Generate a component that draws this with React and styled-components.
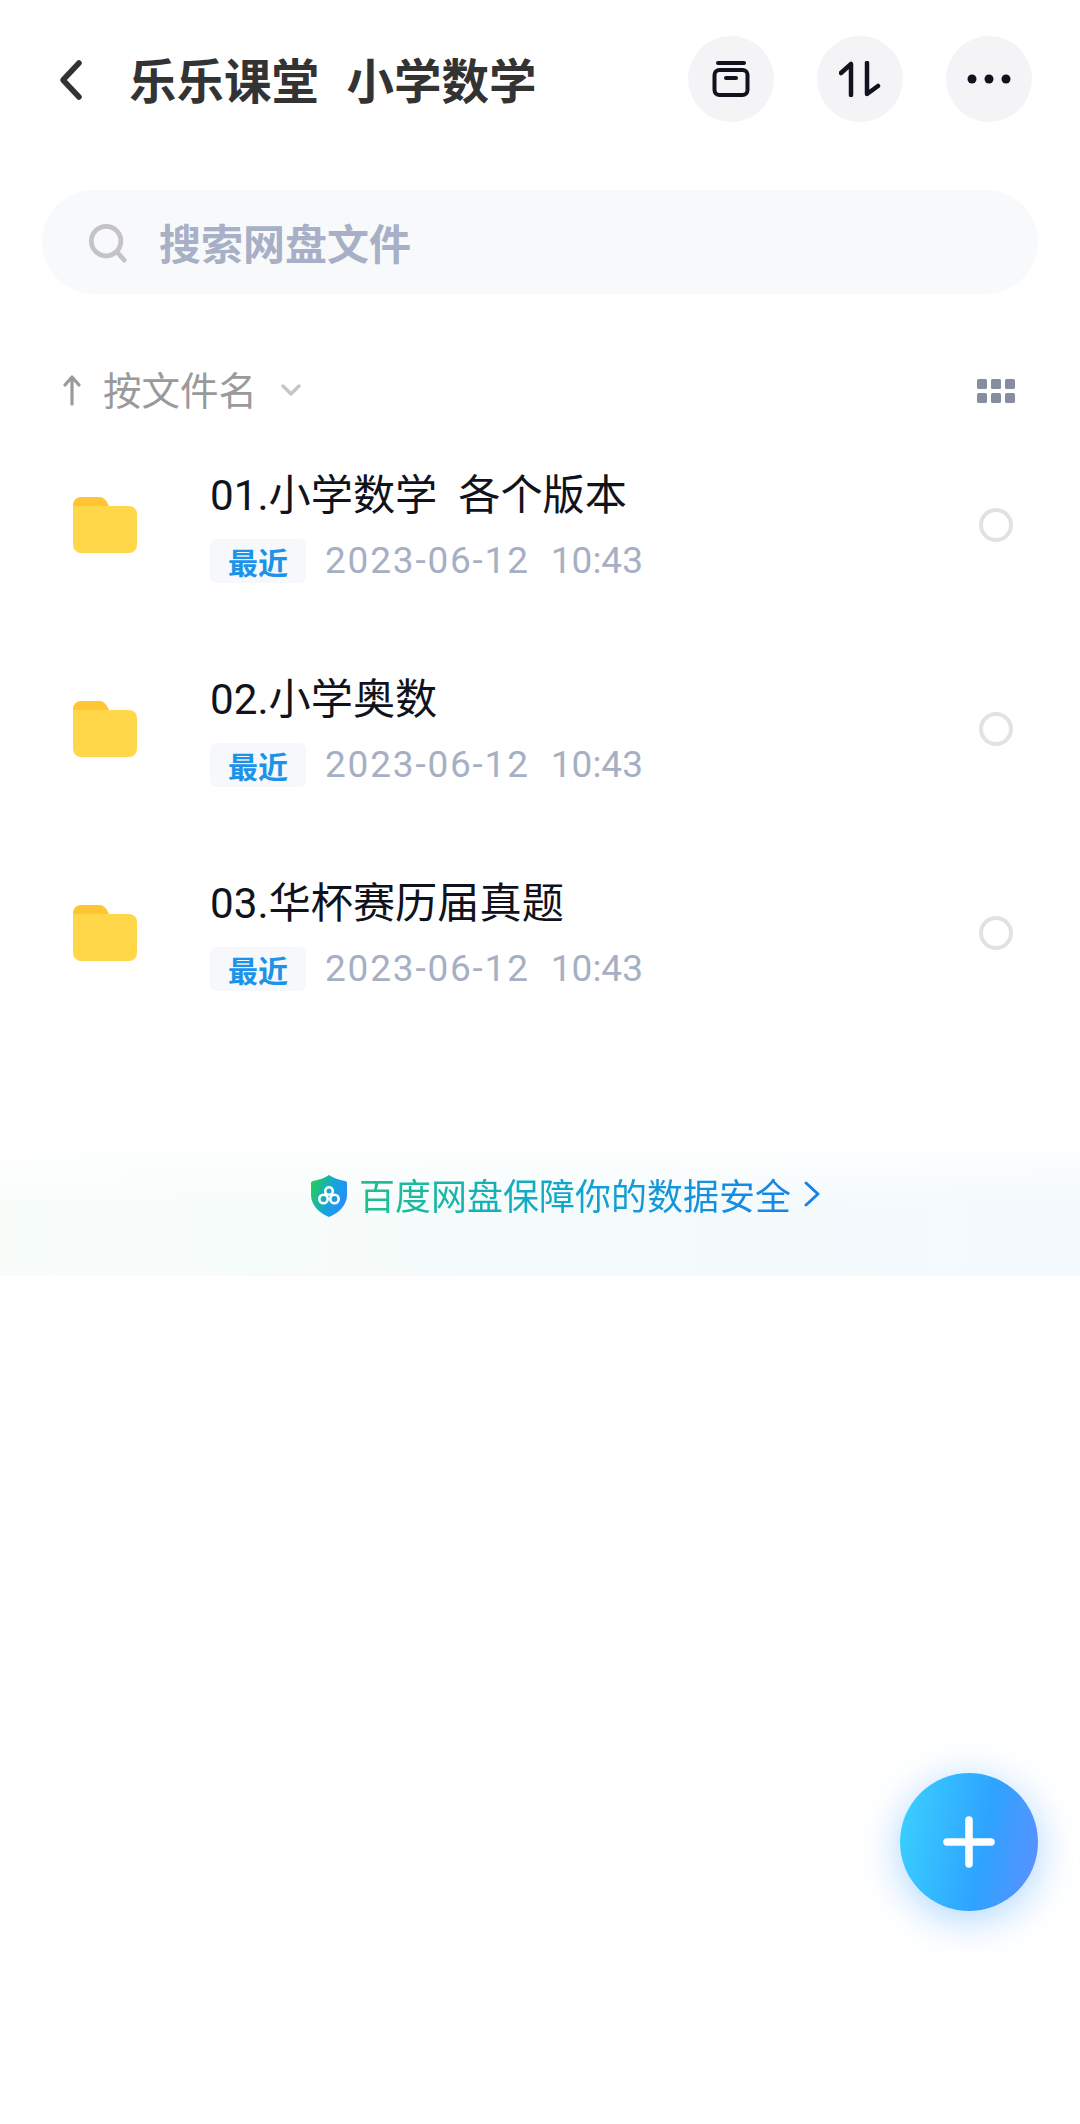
import React from "react";
import styled, { createGlobalStyle } from "styled-components";

const Global = createGlobalStyle`
  html, body { margin: 0; padding: 0; background: #fff; }
  * { box-sizing: border-box; }
  body { font-family: "Noto Sans CJK SC", "Noto Sans", sans-serif; }
`;

const Page = styled.div`
  position: relative;
  width: 1080px;
  height: 2124px;
  overflow: hidden;
  background: #fff;
  display: flex;
  flex-direction: column;
`;

const Header = styled.header`
  display: flex;
  align-items: center;
  height: 86px;
  margin-top: 36px;
  padding: 0 48px 0 56px;
`;

const BackIcon = styled.svg`
  width: 30px;
  height: 44px;
  flex: none;
  margin-right: 43px;
`;

const Title = styled.h1`
  flex: 1;
  margin: 0;
  font-size: 47.5px;
  font-weight: 700;
  line-height: 60px;
  color: #333;
  white-space: pre;
  word-spacing: 3px;
`;

const RoundButtons = styled.div`
  display: flex;
  gap: 43px;
`;

const RoundButton = styled.div`
  width: 86px;
  height: 86px;
  border-radius: 50%;
  background: #f4f4f6;
  display: flex;
  align-items: center;
  justify-content: center;
`;

const Search = styled.div`
  display: flex;
  align-items: center;
  height: 104px;
  margin: 68px 42px 0;
  padding-left: 46px;
  border-radius: 52px;
  background: #f8f9fb;
`;

const SearchIcon = styled.svg`
  width: 40px;
  height: 42px;
  flex: none;
  margin-top: 2px;
  margin-right: 31px;
`;

const SearchText = styled.span`
  font-size: 42px;
  font-weight: 700;
  line-height: 56px;
  color: #a7b0c6;
`;

const SortBar = styled.div`
  display: flex;
  align-items: center;
  height: 60px;
  margin-top: 66px;
  padding: 0 65px 0 63px;
`;

const SortLabel = styled.span`
  margin: 0 24px 0 22px;
  padding-bottom: 5px;
  font-size: 38.5px;
  line-height: 50px;
  color: #9a9a9a;
`;

const GridIcon = styled.svg`
  width: 38px;
  height: 24px;
  margin-left: auto;
  margin-top: 2px;
`;

const List = styled.div`
  display: flex;
  flex-direction: column;
  margin-top: 3px;
`;

const Row = styled.div`
  display: flex;
  align-items: center;
  height: 204px;
  padding: 0 67px 0 73px;
`;

const FolderIcon = styled.svg`
  width: 64px;
  height: 56px;
  flex: none;
  margin-right: 73px;
`;

const RowBody = styled.div`
  flex: 1;
  min-width: 0;
  display: flex;
  flex-direction: column;
  gap: 17px;
  padding-top: 3px;
`;

const RowTitle = styled.div`
  font-family: "Roboto", "Noto Sans CJK SC", sans-serif;
  font-size: 42.2px;
  line-height: 52px;
  color: #10131c;
  white-space: pre;
`;

const Meta = styled.div`
  display: flex;
  align-items: center;
  gap: 19px;
`;

const Tag = styled.span`
  width: 96px;
  height: 44px;
  border-radius: 6px;
  background: #f6f8fb;
  display: flex;
  align-items: center;
  justify-content: center;
  font-size: 30px;
  font-weight: 700;
  color: #1c93e8;
`;

const DateText = styled.span`
  font-family: "Roboto", sans-serif;
  font-size: 37px;
  line-height: 44px;
  letter-spacing: 1.8px;
  color: #a6afc3;
  white-space: pre;
`;

const TimeText = styled(DateText)`
  margin-left: 2px;
  letter-spacing: 0;
`;

const Radio = styled.span`
  width: 34px;
  height: 34px;
  flex: none;
  border-radius: 50%;
  border: 4px solid #e2e2e4;
`;

const Banner = styled.div`
  display: flex;
  align-items: center;
  justify-content: center;
  height: 138px;
  margin-top: 103px;
  padding: 0 0 26px 52px;
  background:
    linear-gradient(180deg, #ffffff 0%, rgba(255, 255, 255, 0) 50%),
    linear-gradient(90deg, #f8fdfa 0%, #f5fbfb 50%, #f3f9fd 100%);
`;

const ShieldIcon = styled.svg`
  width: 36px;
  height: 42px;
  flex: none;
  margin: 4px 12px 0 0;
`;

const BannerText = styled.span`
  font-size: 36px;
  line-height: 46px;
  background: linear-gradient(90deg, #1ec08f 0%, #12a8c8 45%, #1484ea 100%);
  -webkit-background-clip: text;
  background-clip: text;
  color: transparent;
`;

const BannerArrow = styled.svg`
  width: 18px;
  height: 28px;
  margin-left: 12px;
`;

const Fab = styled.div`
  position: absolute;
  left: 900px;
  top: 1773px;
  width: 138px;
  height: 138px;
  border-radius: 50%;
  background: linear-gradient(100deg, #3bd2ff 0%, #2ea3ff 60%, #5f8fff 100%);
  box-shadow: 0 8px 42px rgba(50, 150, 255, 0.4);
  display: flex;
  align-items: center;
  justify-content: center;
`;

const Folder = () => (
  <FolderIcon viewBox="0 0 64 56">
    <path d="M0 8a8 8 0 0 1 8-8h18c4 0 6 2 8 5l2 4H0z" fill="#ffc533" />
    <path d="M0 9h56a8 8 0 0 1 8 8v31a8 8 0 0 1-8 8H8a8 8 0 0 1-8-8z" fill="#ffd749" />
  </FolderIcon>
);

const rows = ["01.小学数学  各个版本", "02.小学奥数", "03.华杯赛历届真题"];

export default function App() {
  return (
    <Page>
      <Global />
      <Header>
        <BackIcon viewBox="0 0 30 44">
          <path d="M23 6 7 23l16 17" fill="none" stroke="#333" strokeWidth="5.5" strokeLinecap="round" strokeLinejoin="round" />
        </BackIcon>
        <Title>乐乐课堂  小学数学</Title>
        <RoundButtons>
          <RoundButton>
            <svg width="38" height="38" viewBox="0 0 38 38">
              <path d="M6 3h26" stroke="#10131f" strokeWidth="4" strokeLinecap="round" />
              <rect x="2.5" y="10" width="33" height="25" rx="5" fill="none" stroke="#10131f" strokeWidth="4" />
              <path d="M14 18h10" stroke="#10131f" strokeWidth="4" strokeLinecap="round" />
            </svg>
          </RoundButton>
          <RoundButton>
            <svg width="42" height="36" viewBox="0 0 42 36">
              <path d="M2 12 12 3v31" fill="none" stroke="#10131f" strokeWidth="4.5" strokeLinecap="round" strokeLinejoin="round" />
              <path d="M28 2v31l11-8" fill="none" stroke="#10131f" strokeWidth="4.5" strokeLinecap="round" strokeLinejoin="round" />
            </svg>
          </RoundButton>
          <RoundButton>
            <svg width="44" height="12" viewBox="0 0 44 12">
              <circle cx="5" cy="6" r="4.5" fill="#10131f" />
              <circle cx="22" cy="6" r="4.5" fill="#10131f" />
              <circle cx="39" cy="6" r="4.5" fill="#10131f" />
            </svg>
          </RoundButton>
        </RoundButtons>
      </Header>

      <Search>
        <SearchIcon viewBox="0 0 42 42">
          <circle cx="19" cy="19" r="15.5" fill="none" stroke="#c4c4c6" strokeWidth="5" />
          <path d="m31 31 7 8" stroke="#c4c4c6" strokeWidth="5" strokeLinecap="round" />
        </SearchIcon>
        <SearchText>搜索网盘文件</SearchText>
      </Search>

      <SortBar>
        <svg width="18" height="32" viewBox="0 0 18 32">
          <path d="M9 30V3M2 11l7-8 7 8" fill="none" stroke="#9a9a9a" strokeWidth="3.2" strokeLinecap="round" strokeLinejoin="round" />
        </svg>
        <SortLabel>按文件名</SortLabel>
        <svg width="20" height="12" viewBox="0 0 20 12">
          <path d="m2 2 8 8 8-8" fill="none" stroke="#c6c6c8" strokeWidth="3.4" strokeLinecap="round" strokeLinejoin="round" />
        </svg>
        <GridIcon viewBox="0 0 38 24">
          {[0, 14, 28].map((x) =>
            [0, 14].map((y) => <rect key={`${x}-${y}`} x={x} y={y} width="10" height="10" rx="1.5" fill="#868da0" />)
          )}
        </GridIcon>
      </SortBar>

      <List>
        {rows.map((t) => (
          <Row key={t}>
            <Folder />
            <RowBody>
              <RowTitle>{t}</RowTitle>
              <Meta>
                <Tag>最近</Tag>
                <DateText>2023-06-12</DateText>
                <TimeText>10:43</TimeText>
              </Meta>
            </RowBody>
            <Radio />
          </Row>
        ))}
      </List>

      <Banner>
        <ShieldIcon viewBox="0 0 36 42">
          <defs>
            <linearGradient id="shield" x1="0" y1="0.2" x2="1" y2="0.6">
              <stop offset="0" stopColor="#26cf55" />
              <stop offset="0.55" stopColor="#14a5d8" />
              <stop offset="1" stopColor="#2a8cff" />
            </linearGradient>
          </defs>
          <path d="M18 0C22 3 28 5 34 6c1 0 2 1 2 2v12c0 10-8 18-18 22C8 38 0 30 0 20V8c0-1 1-2 2-2 6-1 12-3 16-6z" fill="url(#shield)" />
          <circle cx="12.5" cy="24" r="4.2" fill="none" stroke="#fff" strokeWidth="2.6" />
          <circle cx="23.5" cy="24" r="4.2" fill="none" stroke="#fff" strokeWidth="2.6" />
          <circle cx="18" cy="16" r="3.8" fill="none" stroke="#fff" strokeWidth="2.6" />
        </ShieldIcon>
        <BannerText>百度网盘保障你的数据安全</BannerText>
        <BannerArrow viewBox="0 0 18 28">
          <path d="m3 3 12 11L3 25" fill="none" stroke="#1484ea" strokeWidth="3" strokeLinecap="round" strokeLinejoin="round" />
        </BannerArrow>
      </Banner>

      <Fab>
        <svg width="52" height="52" viewBox="0 0 52 52">
          <path d="M26 4v44M4 26h44" stroke="#fff" strokeWidth="7.5" strokeLinecap="round" />
        </svg>
      </Fab>
    </Page>
  );
}
